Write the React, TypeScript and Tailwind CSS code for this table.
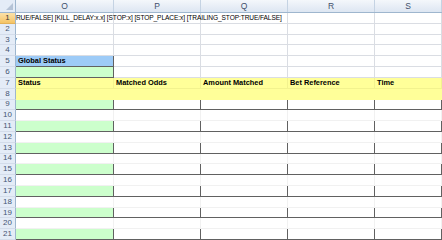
import React from 'react';

const colW = ['w-[98px]', 'w-[87px]', 'w-[87px]', 'w-[87px]', 'flex-1'];
const letters = ['O', 'P', 'Q', 'R', 'S'];
const heads = ['Status', 'Matched Odds', 'Amount Matched', 'Bet Reference', 'Time'];

type Cell = { bg: string; b: string; r: string };

function cellStyle(row: number, c: number): Cell {
  const grid = 'border-[#dadde3]';
  const dark = 'border-[#616161]';
  if (row <= 4) return { bg: 'bg-white', b: row === 4 && c === 0 ? dark : grid, r: grid };
  if (row === 5)
    return c === 0 ? { bg: 'bg-[#9dcbf7]', b: dark, r: dark } : { bg: 'bg-white', b: grid, r: grid };
  if (row === 6)
    return c === 0 ? { bg: 'bg-[#ccffcc]', b: dark, r: dark } : { bg: 'bg-white', b: dark, r: grid };
  if (row === 7) return { bg: 'bg-[#ffff99]', b: 'border-[#f2f28e]', r: dark };
  if (row === 8) return { bg: 'bg-[#ffff99]', b: dark, r: 'border-[#ffff99]' };
  if (row % 2 === 1) return { bg: c === 0 ? 'bg-[#ccffcc]' : 'bg-white', b: dark, r: dark };
  return { bg: 'bg-white', b: dark, r: 'border-[#f1f1f1]' };
}

const RowHead: React.FC<{ n: number }> = ({ n }) => (
  <div
    className={`w-[16px] shrink-0 border-r border-b border-r-[#9eb6ce] flex items-center justify-center text-[8px] leading-none ${
      n === 1
        ? 'bg-gradient-to-b from-[#fbe1a8] to-[#f5c464] border-b-[#e3b25a] text-[#3b3b3b]'
        : 'bg-[#e4ecf7] border-b-[#d3dcea] text-[#445673]'
    }`}
  >
    {n}
  </div>
);

export default function App() {
  const rows = Array.from({ length: 21 }, (_, i) => i + 1);
  return (
    <div className="w-[442px] h-[240px] overflow-hidden bg-white font-['Liberation_Sans',Arial,sans-serif] select-none">
      {/* column header */}
      <div className="flex h-[13px] border-b border-[#9eb6ce] bg-gradient-to-b from-[#f4f7fb] to-[#dde6f2]">
        <div className="w-[16px] shrink-0 border-r border-[#9eb6ce] bg-[#e4ecf7] relative">
          <div className="absolute right-[2px] bottom-[2px] w-0 h-0 border-l-[7px] border-l-transparent border-b-[7px] border-b-[#b5c3d6]" />
        </div>
        {letters.map((l, i) => (
          <div
            key={l}
            className={`${colW[i]} shrink-0 border-r border-[#c5d3e3] flex items-center justify-center text-[8.5px] leading-none text-[#3f4f6b]`}
          >
            {l}
          </div>
        ))}
      </div>

      {rows.map((row) => (
        <div key={row} className="flex h-[10.82px]">
          <RowHead n={row} />
          {letters.map((l, c) => {
            const s = cellStyle(row, c);
            return (
              <div
                key={l}
                className={`${colW[c]} shrink-0 border-r border-b ${s.b} ${s.r} ${s.bg} flex items-center whitespace-nowrap text-[7.4px] leading-none text-black ${
                  row === 1 && c === 0 ? 'relative z-10 [clip-path:inset(0_-500px_0_0)]' : 'overflow-hidden'
                }`}
              >
                {row === 1 && c === 0 && (
                  <span className="ml-[-4px] text-[6.6px] tracking-[-0.1px]">
                    TRUE/FALSE] [KILL_DELAY:x.x] [STOP:x] [STOP_PLACE:x] [TRAILING_STOP:TRUE/FALSE]
                  </span>
                )}
                {row === 3 && c === 0 && <span className="ml-[-3px] italic text-[7px]">y</span>}
                {row === 5 && c === 0 && <span className="ml-[2px] font-bold">Global Status</span>}
                {row === 7 && <span className="ml-[2px] font-bold">{heads[c]}</span>}
              </div>
            );
          })}
        </div>
      ))}
    </div>
  );
}
